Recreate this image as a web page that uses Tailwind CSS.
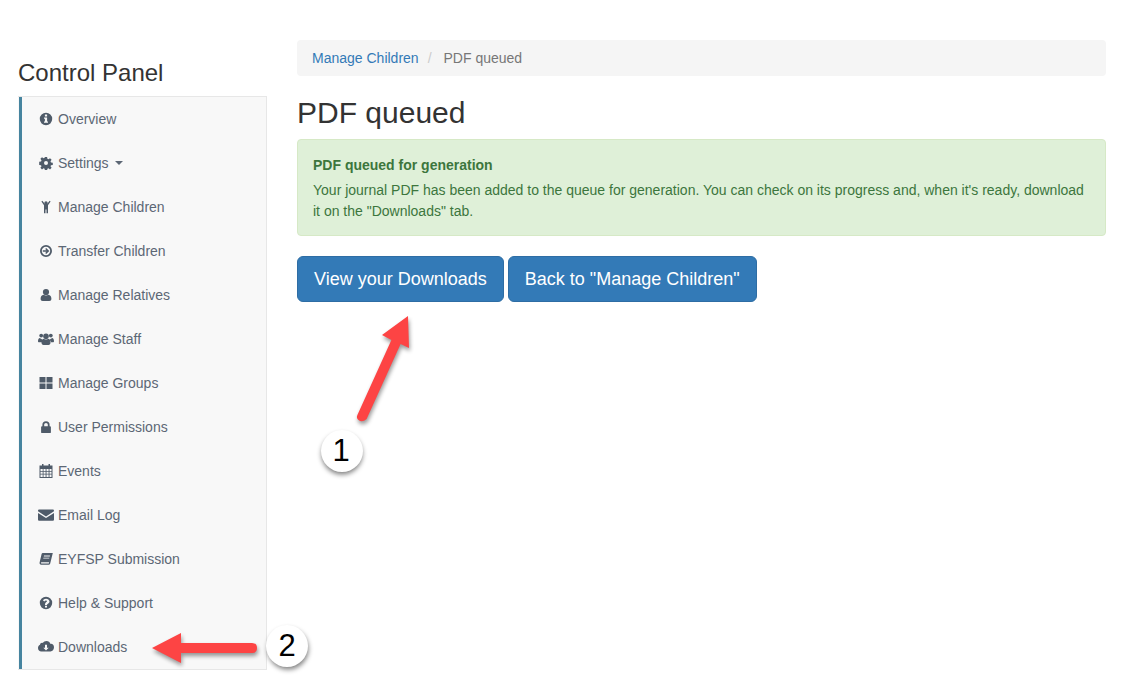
<!DOCTYPE html>
<html lang="en">
<head>
  <meta charset="UTF-8" />
  <title>PDF queued</title>
  <script src="https://cdn.jsdelivr.net/npm/@tailwindcss/browser@4"></script>
</head>
<body class="relative h-[693px] w-[1122px] overflow-hidden bg-white font-['Liberation_Sans',Arial,sans-serif] text-sm text-[#333]">
  <div class="flex items-start pt-10">

    <!-- Sidebar -->
    <aside class="ml-[18px] w-[249px] shrink-0">
      <h2 class="mt-5 mb-2.5 text-2xl leading-[26px] text-[#333]">Control Panel</h2>
      <nav class="border border-[#e7e7e7] border-l-0 bg-[#f8f8f8] pl-px">
        <ul class="border-l-[3px] border-[#46849f] text-[#5c6775]">
          <li class="flex h-11 items-center gap-[5px] pl-[17px]">
            <svg class="h-[14px] w-[14px] fill-[#4f5b69]" viewBox="0 0 14 14"><path fill-rule="evenodd" d="M7 .8a6.2 6.2 0 1 1 0 12.4A6.2 6.2 0 0 1 7 .8zM5.9 2.6v1.9h2.2V2.6zM5 5.6v1.2h.9v2.7H5v1.2h4V9.5h-.9V5.6z"/></svg>
            Overview
          </li>
          <li class="flex h-11 items-center gap-[5px] pl-[17px]">
            <svg class="h-[14px] w-[14px] fill-[#4f5b69]" viewBox="0 0 14 14"><path fill-rule="evenodd" d="M5.9.9h2.2l.3 1.8 1.1.5 1.5-1 1.6 1.5-1.1 1.6.5 1.1 1.8.3v2.2l-1.8.3-.5 1.1 1.1 1.5-1.6 1.6-1.5-1.1-1.1.5-.3 1.8H5.900l-.3-1.800-1.100-.5-1.500 1.100-1.600-1.600 1.100-1.500-.5-1.100-1.800-.3V5.800l1.800-.3.5-1.100-1.100-1.600 1.600-1.500 1.500 1 1.100-.5zM7 5a2 2 0 1 0 0 4 2 2 0 0 0 0-4z"/></svg>
            <span>Settings</span>
            <span class="ml-[1px] h-0 w-0 border-x-4 border-t-4 border-x-transparent border-t-[#5c6775]"></span>
          </li>
          <li class="flex h-11 items-center gap-[5px] pl-[17px]">
            <svg class="h-[14px] w-[14px] fill-[#4f5b69]" viewBox="0 0 14 14"><circle cx="7" cy="2.900" r="1.700"/><path d="M2.400 1.600l1-.8L5.500 3.500C6.400 4.100 7.600 4.100 8.500 3.500L10.600.8l1 .8L9 5.200V13.200H7.500V9.500h-1V13.200H5V5.200z"/></svg>
            Manage Children
          </li>
          <li class="flex h-11 items-center gap-[5px] pl-[17px]">
            <svg class="h-[14px] w-[14px] fill-[#4f5b69]" viewBox="0 0 14 14"><path fill-rule="evenodd" d="M7 1a6 6 0 1 1 0 12A6 6 0 0 1 7 1zm0 1.800a4.200 4.200 0 1 0 0 8.400 4.200 4.200 0 0 0 0-8.400zM7.200 3.900L10.300 7 7.200 10.100 6.200 9.100 7.500 7.800H3.800V6.200h3.700L6.200 4.900z"/></svg>
            Transfer Children
          </li>
          <li class="flex h-11 items-center gap-[5px] pl-[17px]">
            <svg class="h-[14px] w-[14px] fill-[#4f5b69]" viewBox="0 0 14 14"><circle cx="7" cy="4" r="3.100"/><path d="M4.600 6.700C5.900 7.800 8.100 7.800 9.400 6.700 11.300 7 12.400 8.500 12.400 10.800 12.400 12.200 11.600 13 10.300 13H3.700C2.400 13 1.600 12.200 1.600 10.800 1.600 8.500 2.700 7 4.600 6.700z"/></svg>
            Manage Relatives
          </li>
          <li class="flex h-11 items-center gap-[5px] pl-[17px]">
            <svg class="ml-[-1px] mr-[-1px] h-[14px] w-4 fill-[#4f5b69]" viewBox="0 0 16 14"><circle cx="3.200" cy="3.600" r="1.900"/><circle cx="12.800" cy="3.600" r="1.900"/><circle cx="8" cy="4.200" r="2.800"/><path d="M0 9.200C0 7.300.6 6 2 6c.5.700 1.400 1 2 .9-.3.900-.2 2.300.2 3.300H1C.4 10.200 0 9.800 0 9.200zM16 9.200C16 7.300 15.400 6 14 6c-.5.700-1.400 1-2 .9.300.9.2 2.300-.2 3.300H15C15.600 10.200 16 9.800 16 9.200zM5.500 6.800C6.800 7.800 9.200 7.800 10.500 6.800 12 7 12.500 8.600 12.500 10.500 12.500 12 11.800 13 10.500 13H5.500C4.200 13 3.500 12 3.500 10.500 3.500 8.600 4 7 5.500 6.800z"/></svg>
            Manage Staff
          </li>
          <li class="flex h-11 items-center gap-[5px] pl-[17px]">
            <svg class="h-[14px] w-[14px] fill-[#4f5b69]" viewBox="0 0 14 14"><path d="M.5 1h6v5.500h-6zM7.500 1h6v5.500h-6zM.5 7.500h6V13h-6zM7.500 7.500h6V13h-6z"/></svg>
            Manage Groups
          </li>
          <li class="flex h-11 items-center gap-[5px] pl-[17px]">
            <svg class="h-[14px] w-[14px] fill-[#4f5b69]" viewBox="0 0 14 14"><path fill-rule="evenodd" d="M7 1.200a3.600 3.600 0 0 1 3.600 3.600V6.200h.4c.5 0 .9.400.9.900v5.100c0 .5-.4.900-.9.900H3c-.5 0-.9-.4-.9-.9V7.100c0-.5.400-.9.900-.9h.4V4.800A3.600 3.600 0 0 1 7 1.200zM7 3c-1 0-1.800.8-1.800 1.800V6.200h3.600V4.800C8.800 3.800 8 3 7 3z"/></svg>
            User Permissions
          </li>
          <li class="flex h-11 items-center gap-[5px] pl-[17px]">
            <svg class="h-[14px] w-[14px] fill-[#4f5b69]" viewBox="0 0 14 14"><path fill-rule="evenodd" d="M3 0h1.500v1.500h5V0H11v1.500h2.500V14H.5V1.500H3zM1.500 5v2h2.200V5zm3 0v2h2.100V5zm3 0v2h2.100V5zm3 0v2h2V5zM1.500 7.800v2h2.200v-2zm3 0v2h2.100v-2zm3 0v2h2.100v-2zm3 0v2h2v-2zM1.500 10.600V13h2.200v-2.400zm3 0V13h2.100v-2.400zm3 0V13h2.100v-2.400zm3 0V13h2v-2.400z"/></svg>
            Events
          </li>
          <li class="flex h-11 items-center gap-[5px] pl-[17px]">
            <svg class="ml-[-1px] mr-[-1px] h-[14px] w-4 fill-[#4f5b69]" viewBox="0 0 16 14"><path d="M1.300 1.500H14.700C15.400 1.500 16 2 16 2.700V3.200L8 8.400 0 3.200V2.700C0 2 .6 1.500 1.300 1.500zM0 4.900L8 10.100 16 4.900V11.500C16 12.200 15.400 12.800 14.700 12.800H1.300C.6 12.800 0 12.200 0 11.500z"/></svg>
            Email Log
          </li>
          <li class="flex h-11 items-center gap-[5px] pl-[17px]">
            <svg class="h-[14px] w-[14px] fill-[#4f5b69]" viewBox="0 0 14 14"><path fill-rule="evenodd" d="M3.800 1H13.800L11.200 11.600c-.2.800-.7 1.200-1.500 1.200H2.200C1 12.800.3 11.800.6 10.600L2.600 2c.1-.6.600-1 1.200-1zM5 3.500l-.2.9h6l.2-.9zM4.400 5.700l-.2.900h6l.2-.9zM2.500 10.200c-.4 0-.6.300-.6.600s.2.600.6.600h7.300l.3-1.200z"/></svg>
            EYFSP Submission
          </li>
          <li class="flex h-11 items-center gap-[5px] pl-[17px]">
            <svg class="h-[14px] w-[14px] fill-[#4f5b69]" viewBox="0 0 14 14"><path fill-rule="evenodd" d="M7 .8a6.200 6.200 0 1 1 0 12.400A6.200 6.200 0 0 1 7 .8zM6 9.700v1.700h2V9.700zM7 2.700c-1.400 0-2.500.7-3 1.800l1.400 1c.4-.6.800-1 1.500-1 .6 0 1.100.3 1.100.8 0 .5-.4.700-1 1C7 6.700 6 7.200 6 8.400v.5h2c0-.6.300-.8 1-1.200.8-.4 1.500-1 1.500-2.100 0-1.700-1.800-2.900-3.500-2.900z"/></svg>
            Help &amp; Support
          </li>
          <li class="flex h-11 items-center gap-[5px] pl-[17px]">
            <svg class="ml-[-1px] mr-[-1px] h-[14px] w-4 fill-[#4f5b69]" viewBox="0 0 16 14"><path fill-rule="evenodd" d="M8.500 1c1.900 0 3.400 1.100 4 2.900.2 0 .4-.1.500-.1 1.700 0 3 1.500 3 3.500 0 2.200-1.500 4.200-3.500 4.200H3.300C1.500 11.500 0 10 0 8c0-1.400.8-2.700 2-3.300.1-1.100 1-1.900 2-1.900.3 0 .6.100.8.200C5.500 1.800 6.900 1 8.500 1zM7 4.800v3H5.300L8 10.600l2.700-2.800H9v-3z"/></svg>
            Downloads
          </li>
        </ul>
      </nav>
    </aside>

    <!-- Main -->
    <main class="ml-[30px] w-[809px] shrink-0">
      <ol class="flex h-9 items-center rounded bg-[#f5f5f5] px-[15px]">
        <li class="text-[#337ab7]">Manage Children</li>
        <li class="pl-[9px] pr-3 text-[#ccc]">/</li>
        <li class="text-[#777]">PDF queued</li>
      </ol>
      <h1 class="mt-5 mb-2.5 text-[30px] leading-[33px] text-[#333]">PDF queued</h1>
      <div class="mb-5 h-[97px] rounded border border-[#d6e9c6] bg-[#dff0d8] px-[15px] pt-[15px] text-[#3c763d]">
        <p class="font-bold leading-5">PDF queued for generation</p>
        <p class="mt-[5px] leading-[21px]">Your journal PDF has been added to the queue for generation. You can check on its progress and, when it's ready, download it on the "Downloads" tab.</p>
      </div>
      <div class="flex gap-1">
        <a class="flex h-[46px] items-center rounded-md border border-[#2e6da4] bg-[#337ab7] px-4 text-lg text-white">View your Downloads</a>
        <a class="flex h-[46px] items-center rounded-md border border-[#2e6da4] bg-[#337ab7] px-4 text-lg text-white">Back to "Manage Children"</a>
      </div>
    </main>
  </div>

  <!-- Screenshot annotations -->
  <svg class="absolute top-0 left-0 h-[693px] w-[1122px]" viewBox="0 0 1122 693">
    <g fill="#000" opacity=".4" transform="translate(1 3)" style="filter:blur(2px)">
      <path d="M408 316L409 348 400.600 344.100 366.600 419.100Q362 423 358.500 420 356 418 357.400 414.900L391.400 339.900 382 335z"/>
      <path d="M152 648L181 633V643H252Q257 643 257 648 257 653 252 653H181V663z"/>
    </g>
    <path fill="#fd4444" d="M408 316L409 348 400.600 344.100 366.600 419.100Q362 423 358.500 420 356 418 357.400 414.900L391.400 339.900 382 335z"/>
    <path fill="#fd4444" d="M152 648L181 633V643H252Q257 643 257 648 257 653 252 653H181V663z"/>
    <circle cx="342" cy="454" r="20.500" fill="#000" opacity=".5" style="filter:blur(2.500px)"/>
    <circle cx="342" cy="451" r="21" fill="#fff"/>
    <circle cx="288" cy="649" r="20.500" fill="#000" opacity=".5" style="filter:blur(2.500px)"/>
    <circle cx="287" cy="646" r="21" fill="#fff"/>
    <text x="341" y="461" text-anchor="middle" font-family="Liberation Sans, Arial, sans-serif" font-size="31" fill="#000">1</text>
    <text x="287" y="656" text-anchor="middle" font-family="Liberation Sans, Arial, sans-serif" font-size="31" fill="#000">2</text>
  </svg>
</body>
</html>
